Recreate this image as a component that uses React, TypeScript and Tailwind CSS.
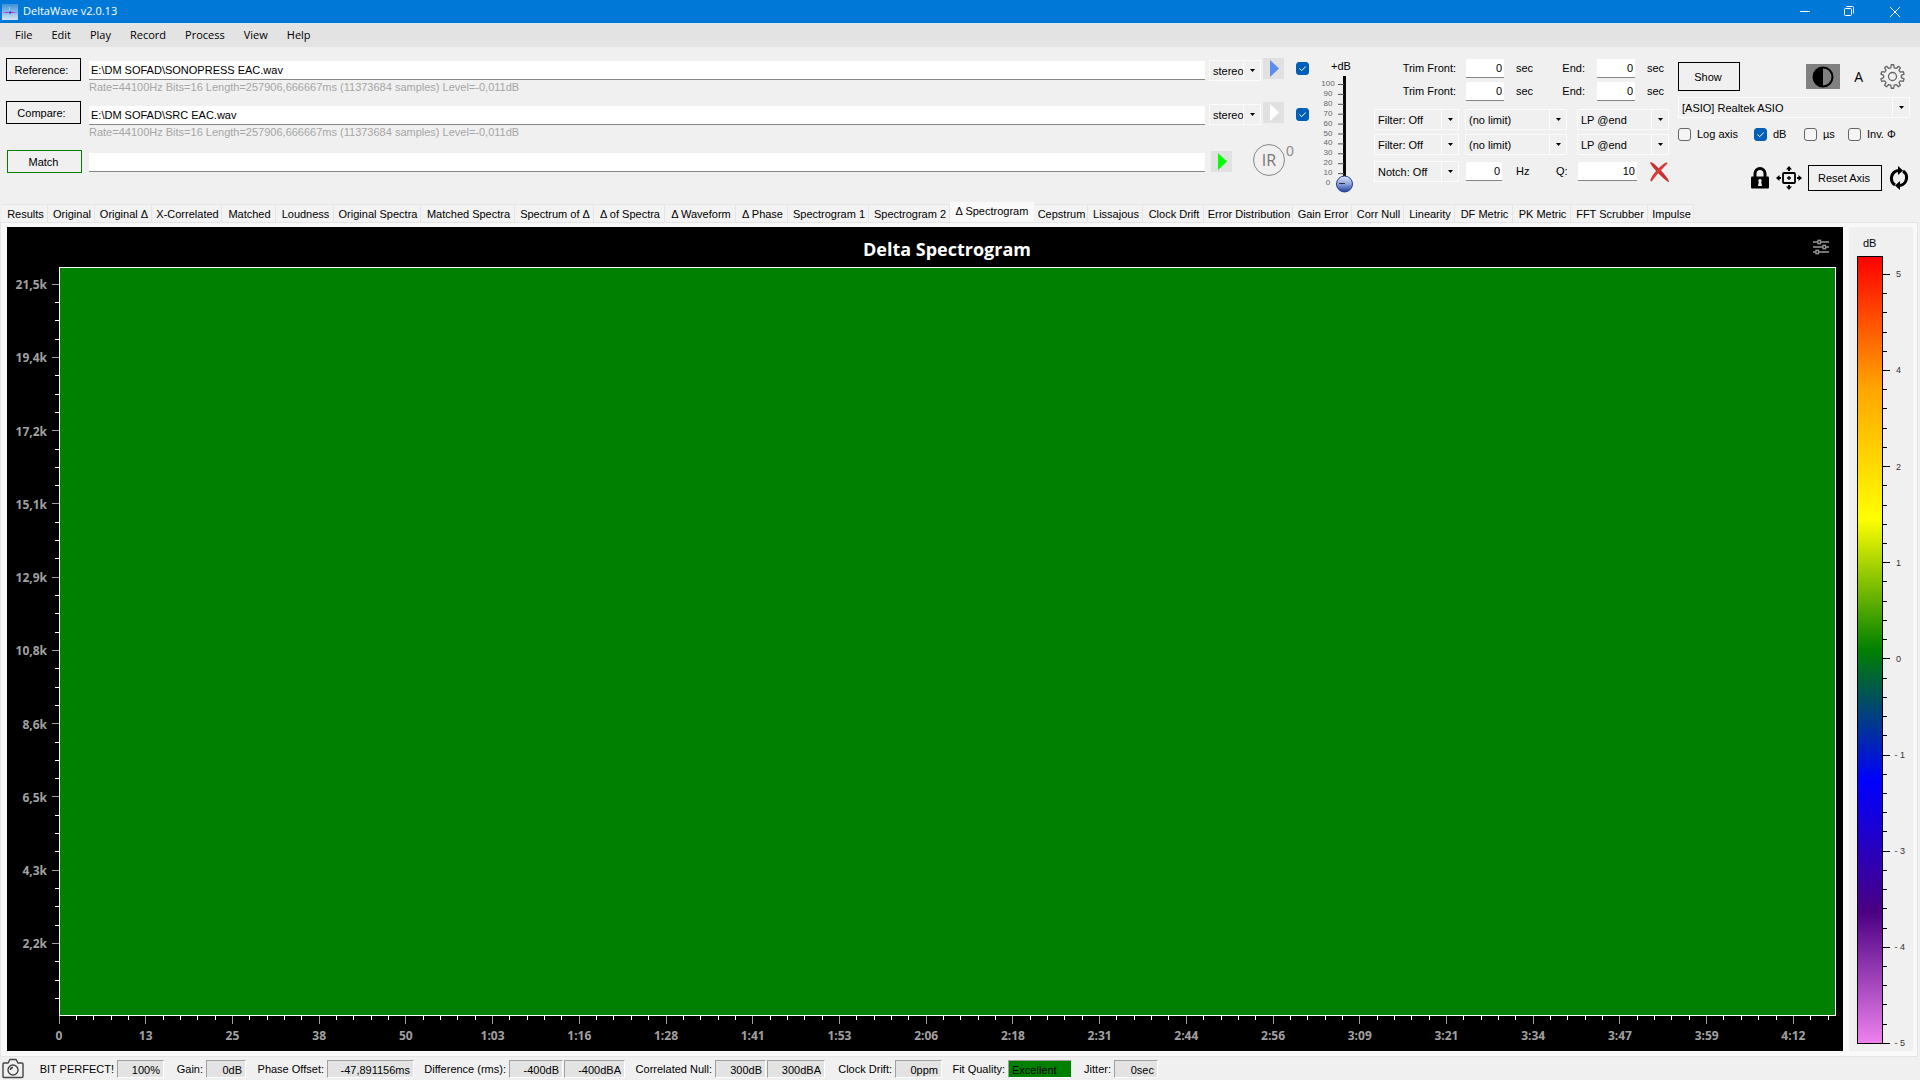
import type { ReactNode } from "react";

const tabs = [
  { name: "Results", width: "w-[46px]" },
  { name: "Original", width: "w-[47px]" },
  { name: "Original Δ", width: "w-[57px]" },
  { name: "X-Correlated", width: "w-[70px]" },
  { name: "Matched", width: "w-[54px]" },
  { name: "Loudness", width: "w-[58px]" },
  { name: "Original Spectra", width: "w-[87px]" },
  { name: "Matched Spectra", width: "w-[94px]" },
  { name: "Spectrum of Δ", width: "w-[79px]" },
  { name: "Δ of Spectra", width: "w-[71px]" },
  { name: "Δ Waveform", width: "w-[71px]" },
  { name: "Δ Phase", width: "w-[52px]" },
  { name: "Spectrogram 1", width: "w-[81px]" },
  { name: "Spectrogram 2", width: "w-[81px]" },
  { name: "Δ Spectrogram", width: "w-[84px]" },
  { name: "Cepstrum", width: "w-[54px]" },
  { name: "Lissajous", width: "w-[55px]" },
  { name: "Clock Drift", width: "w-[61px]" },
  { name: "Error Distribution", width: "w-[89px]" },
  { name: "Gain Error", width: "w-[59px]" },
  { name: "Corr Null", width: "w-[52px]" },
  { name: "Linearity", width: "w-[51px]" },
  { name: "DF Metric", width: "w-[58px]" },
  { name: "PK Metric", width: "w-[58px]" },
  { name: "FFT Scrubber", width: "w-[77px]" },
  { name: "Impulse", width: "w-[46px]" },
];

const status = [
  { label: "BIT PERFECT!", labelWidth: "w-[93px]", values: [{ text: "100%", width: "w-[47px]" }] },
  { label: "Gain:", labelWidth: "w-[42px]", values: [{ text: "0dB", width: "w-[40px]" }] },
  { label: "Phase Offset:", labelWidth: "w-[81px]", values: [{ text: "-47,891156ms", width: "w-[87px]" }] },
  {
    label: "Difference (rms):",
    labelWidth: "w-[95px]",
    values: [
      { text: "-400dB", width: "w-[54px]" },
      { text: "-400dBA", width: "w-[61px]" },
    ],
  },
  {
    label: "Correlated Null:",
    labelWidth: "w-[90px]",
    values: [
      { text: "300dB", width: "w-[51px]" },
      { text: "300dBA", width: "w-[58px]" },
    ],
  },
  { label: "Clock Drift:", labelWidth: "w-[70px]", values: [{ text: "0ppm", width: "w-[47px]" }] },
  { label: "Fit Quality:", labelWidth: "w-[66px]", values: [{ text: "Excellent", width: "w-[64px]", good: true }] },
  { label: "Jitter:", labelWidth: "w-[42px]", values: [{ text: "0sec", width: "w-[44px]" }] },
];

const freqLabels = ["21,5k", "19,4k", "17,2k", "15,1k", "12,9k", "10,8k", "8,6k", "6,5k", "4,3k", "2,2k"];
const timeLabels = [
  "0", "13", "25", "38", "50", "1:03", "1:16", "1:28", "1:41", "1:53", "2:06",
  "2:18", "2:31", "2:44", "2:56", "3:09", "3:21", "3:34", "3:47", "3:59", "4:12",
];
const scaleLabels = ["5", "4", "2", "1", "0", "- 1", "- 3", "- 4", "- 5"];

const range = (n: number) => Array.from({ length: n }, (_, i) => i);

function Play({ color, label }: { color: string; label: string }) {
  return (
    <button aria-label={label} className="flex h-[21px] w-[21px] items-center justify-center bg-[#e1e1e1]">
      <svg width="21" height="21" viewBox="0 0 21 21">
        <path d="M7 2 16 10.5 7 19Z" fill={color} />
      </svg>
    </button>
  );
}

function Check({ label, checked, children }: { label?: string; checked?: boolean; children?: ReactNode }) {
  return (
    <label className="flex items-center gap-[6px]">
      <span className="relative flex">
        <input
          type="checkbox"
          aria-label={label}
          defaultChecked={checked}
          className="peer h-[13px] w-[13px] appearance-none rounded-[3px] border border-[#666] bg-[#f5f5f5] checked:border-[#005fb8] checked:bg-[#005fb8]"
        />
        <svg viewBox="0 0 13 13" className="pointer-events-none absolute inset-0 hidden peer-checked:block">
          <path d="m3.5 6.5 2.2 2.2 4-4.2" fill="none" stroke="#fff" strokeWidth="1" />
        </svg>
      </span>
      {children}
    </label>
  );
}

function Drop({ value, label, className }: { value: string; label: string; className: string }) {
  return (
    <div className={`relative h-[21px] border border-[#fcfcfc] ${className}`}>
      <select aria-label={label} className="block h-full w-full appearance-none bg-transparent pt-px pl-[3px] outline-none">
        <option>{value}</option>
      </select>
      <span className="pointer-events-none absolute inset-y-0 right-0 flex w-[17px] items-center justify-center border-l border-[#fcfcfc]">
        <svg width="5" height="3" viewBox="0 0 5 3">
          <path d="M0 0h5L2.5 3Z" />
        </svg>
      </span>
    </div>
  );
}

function Num({ id, value, className = "w-[38px]" }: { id: string; value: string; className?: string }) {
  return (
    <input
      id={id}
      defaultValue={value}
      className={`h-[19px] border-b border-[#868686] bg-white pr-[2px] text-right outline-none ${className}`}
    />
  );
}

function FilePath({ label, value }: { label: string; value: string }) {
  return (
    <input
      aria-label={label}
      defaultValue={value}
      className="block h-[19px] w-full border-b border-[#868686] bg-white pl-[2px] outline-none"
    />
  );
}

function TrimRow({ id }: { id: string }) {
  return (
    <div className="flex items-center">
      <label htmlFor={`${id}-front`} className="w-[82px] text-right">Trim Front:</label>
      <span className="w-[10px]" />
      <Num id={`${id}-front`} value="0" />
      <span className="w-[50px] pl-3">sec</span>
      <label htmlFor={`${id}-end`} className="w-[31px] text-right">End:</label>
      <span className="w-3" />
      <Num id={`${id}-end`} value="0" />
      <span className="pl-3">sec</span>
    </div>
  );
}

function FilterRow({ id }: { id: string }) {
  return (
    <div className="flex">
      <Drop label={`Filter ${id}`} value="Filter: Off" className="w-[85px]" />
      <Drop label={`Limit ${id}`} value="(no limit)" className="ml-[6px] w-[102px]" />
      <Drop label={`Mode ${id}`} value="LP @end" className="ml-[10px] w-[92px]" />
    </div>
  );
}

// outline of a cog, centred on 12.5
function cogPath(teeth: number, inner: number, outer: number) {
  const pts: string[] = [];
  const step = (Math.PI * 2) / teeth;
  for (let i = 0; i < teeth; i++) {
    const a = i * step - Math.PI / 2;
    [
      [-0.3, inner],
      [-0.17, outer],
      [0.17, outer],
      [0.3, inner],
    ].forEach(([o, r]) => pts.push(`${12.5 + r * Math.cos(a + o * step)} ${12.5 + r * Math.sin(a + o * step)}`));
  }
  return `M${pts.join("L")}Z`;
}

function GainSlider() {
  return (
    <div className="ml-[12px] w-[40px] pt-[12px]">
      <div className="pl-[10px] leading-[14px]">+dB</div>
      <div className="relative">
        <svg width="40" height="122" viewBox="0 0 40 122" className="block overflow-visible">
          <defs>
            <linearGradient id="knob" x1="0" y1="0" x2="0" y2="1">
              <stop offset="0" stopColor="#dfe6fa" />
              <stop offset="0.5" stopColor="#8ea4dc" />
              <stop offset="1" stopColor="#1f3f9f" />
            </linearGradient>
          </defs>
          <rect x="22" y="3" width="3" height="108" fill="#0a0a0a" />
          {range(11).map((i) => (
            <g key={i}>
              <path d={`M17 ${11.5 + i * 9.9}h6`} stroke="#555" strokeWidth="1" />
              <text x="7" y={13 + i * 9.9} textAnchor="middle" fontSize="8" fill="#666">
                {100 - i * 10}
              </text>
            </g>
          ))}
          <circle cx="23.5" cy="111" r="8" fill="url(#knob)" stroke="#23408f" />
          <path d="M18 110.5h6" stroke="#333" />
        </svg>
        <input
          type="range"
          aria-label="Gain dB"
          min="0"
          max="100"
          defaultValue="0"
          className="absolute inset-y-0 right-2 w-4 opacity-0 [direction:rtl] [writing-mode:vertical-lr]"
        />
      </div>
    </div>
  );
}

function Toolbar() {
  return (
    <section className="flex h-[157px] items-start pl-[6px] pr-[10px]">
      <div className="flex w-[76px] flex-col pt-[11px]">
        <button className="h-[23px] w-[75px] border border-black pt-px pr-1">Reference:</button>
        <button className="mt-5 h-[23px] w-[75px] border border-black pt-px pr-1">Compare:</button>
        <button className="mt-[26px] ml-px h-[23px] w-[75px] border border-[#008000] pt-px pr-[2px]">Match</button>
      </div>

      <div className="ml-[7px] min-w-0 flex-1 pt-[14px]">
        <FilePath label="Reference file" value="E:\DM SOFAD\SONOPRESS EAC.wav" />
        <p className="h-[26px] pt-px leading-[13px] text-[#a6a6a6]">
          Rate=44100Hz Bits=16 Length=257906,666667ms (11373684 samples) Level=-0,011dB
        </p>
        <FilePath label="Compare file" value="E:\DM SOFAD\SRC EAC.wav" />
        <p className="h-[28px] pt-px leading-[13px] text-[#a6a6a6]">
          Rate=44100Hz Bits=16 Length=257906,666667ms (11373684 samples) Level=-0,011dB
        </p>
        <FilePath label="Match result" value="" />
      </div>

      <div className="ml-1 w-[100px] pt-[11px]">
        <div className="flex h-[44px] items-start">
          <Drop label="Reference channel" value="stereo" className="mt-[2px] mr-[2px] w-[52px]" />
          <Play color="#5b8def" label="Play reference" />
          <span className="ml-3 pt-1">
            <Check label="Use reference" checked />
          </span>
        </div>
        <div className="flex h-[45px] items-start">
          <Drop label="Compare channel" value="stereo" className="mt-[2px] mr-[2px] w-[52px]" />
          <Play color="#ffffff" label="Play compare" />
          <span className="ml-3 pt-[6px]">
            <Check label="Use compare" checked />
          </span>
        </div>
        <div className="flex items-start">
          <span className="ml-[2px] pt-1">
            <Play color="#00ff00" label="Play match" />
          </span>
          <button className="ml-[21px] mt-[-3px] flex text-[#8c8c8c]">
            <span className="flex h-8 w-8 items-center justify-center rounded-full border border-[#888] font-['Open_Sans',sans-serif] text-base font-normal text-[#777]">
              IR
            </span>
            <span className="ml-px text-sm leading-[14px]">0</span>
          </button>
        </div>
      </div>

      <GainSlider />

      <div className="ml-[13px] w-[295px] pt-[12px]">
        <div className="flex flex-col gap-1">
          <TrimRow id="ref" />
          <TrimRow id="cmp" />
        </div>
        <div className="mt-[8px] flex flex-col gap-1">
          <FilterRow id="1" />
          <FilterRow id="2" />
        </div>
        <div className="mt-[6px] flex items-center">
          <Drop label="Notch" value="Notch: Off" className="w-[85px]" />
          <span className="w-[7px]" />
          <Num id="notch-hz" value="0" className="w-[36px]" />
          <label htmlFor="notch-hz" className="w-[41px] pl-[14px]">Hz</label>
          <label htmlFor="notch-q" className="w-[35px] pl-[13px]">Q:</label>
          <Num id="notch-q" value="10" className="w-[59px]" />
          <button aria-label="Clear filters" className="ml-3">
            <svg width="20" height="20" viewBox="0 0 20 20">
              <path d="M2 1c2 0 15 13 17 18-3-2-14-12-17-18Z" fill="#c8312f" stroke="#c8312f" strokeWidth="1.5" />
              <path d="M18 1C13 3 3 13 2 19c3-4 11-13 16-18Z" fill="#e04a46" stroke="#d43d3a" strokeWidth="1.5" />
            </svg>
          </button>
        </div>
      </div>

      <div className="ml-[9px] w-[232px] pt-[15px]">
        <div className="flex items-center">
          <button className="h-[29px] w-[62px] border border-black pt-px pr-[2px]">Show</button>
          <button aria-label="Contrast" className="ml-auto flex h-[25px] w-[34px] items-center justify-center bg-[#808080]">
            <svg width="22" height="22" viewBox="0 0 22 22">
              <circle cx="11" cy="11" r="9.5" fill="#808080" stroke="#000" strokeWidth="2" />
              <path d="M11 1.5a9.5 9.5 0 0 0 0 19Z" />
            </svg>
          </button>
          <button className="mr-[17px] ml-[14px] pt-px font-['Open_Sans',sans-serif] text-sm">A</button>
          <button aria-label="Settings" className="mr-[5px]">
            <svg width="25" height="25" viewBox="0 0 25 25" fill="none" stroke="#666" strokeWidth="1.3" strokeLinejoin="round">
              <path d={cogPath(10, 8.9, 11.8)} />
              <circle cx="12.5" cy="12.5" r="4" />
            </svg>
          </button>
        </div>
        <Drop label="Audio device" value="[ASIO] Realtek ASIO" className="mt-[6px] w-full" />
        <div className="mt-[9px] flex h-[14px] items-center">
          <span className="w-[76px]"><Check>Log axis</Check></span>
          <span className="w-[50px]"><Check checked>dB</Check></span>
          <span className="w-[44px]"><Check>µs</Check></span>
          <Check>Inv. Φ</Check>
        </div>
        <div className="mt-6 flex items-center justify-end pr-px">
          <button aria-label="Lock axis">
            <svg width="20" height="24" viewBox="0 0 20 24">
              <path d="M5 11V7.5a5 5 0 0 1 10 0V11" fill="none" stroke="#000" strokeWidth="3" />
              <rect x="1" y="10.5" width="18" height="12" rx="1" />
              <circle cx="10" cy="14.8" r="1.7" fill="#f0f0f0" />
              <path d="M9 15h2l1 5H8Z" fill="#f0f0f0" />
            </svg>
          </button>
          <button aria-label="Pan" className="mx-[6px]">
            <svg width="26" height="24" viewBox="0 0 26 24">
              <rect x="7" y="7" width="12" height="10" rx="1" fill="none" stroke="#000" strokeWidth="1.8" />
              <path d="M11 12h4M13 10v4" stroke="#000" strokeWidth="1.3" />
              <path d="m13 0 3 3.5h-2V5h-2V3.5h-2ZM13 24l3-3.5h-2V19h-2v1.5h-2ZM0 12l3.5-3v2H5v2H3.5v2ZM26 12l-3.5-3v2H21v2h1.5v2Z" />
            </svg>
          </button>
          <button className="h-[26px] w-[74px] border border-black pr-[2px]">Reset Axis</button>
          <button aria-label="Refresh" className="ml-[7px]">
            <svg width="20" height="24" viewBox="0 0 20 24">
              <path d="M6 19A8 8 0 0 1 9 4.5M14 5a8 8 0 0 1-3 14.5" fill="none" stroke="#000" strokeWidth="3" />
              <path d="M9 0v9l5-4.5ZM11 24v-9l-5 4.5Z" />
            </svg>
          </button>
        </div>
      </div>
    </section>
  );
}

// positions are given in percent of the plot so that the axes follow its size
function Spectrogram() {
  const yStart = 2.3;
  const yStep = 9.78;
  const xStep = 4.88;
  return (
    <div className="flex min-w-0 flex-1 flex-col bg-black pr-[7px]">
      <div className="flex h-10 items-center">
        <h1 className="flex-1 pt-1 pl-[74px] text-center font-['Open_Sans',sans-serif] text-lg leading-9 font-bold text-white">
          Delta Spectrogram
        </h1>
        <button aria-label="Chart options" className="mr-[7px]">
          <svg width="16" height="16" viewBox="0 0 16 16" fill="#000" stroke="#999" strokeWidth="1.3">
            <path d="M0 3h16M0 8h16M0 13h16" />
            <rect x="5" y="1.3" width="2.5" height="3.4" />
            <rect x="10" y="6.3" width="2.5" height="3.4" />
            <rect x="3" y="11.3" width="2.5" height="3.4" />
          </svg>
        </button>
      </div>
      <div className="flex min-h-0 flex-1">
        <svg className="h-full w-[52px] overflow-visible font-['Open_Sans',sans-serif] text-xs font-bold" shapeRendering="crispEdges">
          {freqLabels.map((t, i) => (
            <g key={t}>
              <line x1="45" x2="52" y1={`${yStart + i * yStep}%`} y2={`${yStart + i * yStep}%`} stroke="#a0a0a0" />
              <text x="40" y={`${yStart + i * yStep}%`} dy="5" textAnchor="end" fill="#a0a0a0">
                {t}
              </text>
              {[1, 2, 3].map((m) => {
                const y = `${yStart + (i + m / 4) * yStep}%`;
                return <line key={m} x1="48" x2="52" y1={y} y2={y} stroke="#fff" />;
              })}
            </g>
          ))}
        </svg>
        <div className="flex-1 border border-white bg-[#008000]" />
      </div>
      <div className="h-[35px] pl-[52px]">
        <svg className="h-full w-full overflow-visible font-['Open_Sans',sans-serif] text-xs font-bold" shapeRendering="crispEdges">
          {timeLabels.map((t, i) => (
            <g key={t}>
              <line x1={`${i * xStep}%`} x2={`${i * xStep}%`} y1="0" y2="8" stroke="#a0a0a0" />
              <text x={`${i * xStep}%`} y="24" textAnchor="middle" fill="#a0a0a0">
                {t}
              </text>
              {(i < 20 ? [1, 2, 3, 4] : [1, 2]).map((m) => {
                const x = `${(i + m / 5) * xStep}%`;
                return <line key={m} x1={x} x2={x} y1="0" y2="4" stroke="#fff" />;
              })}
            </g>
          ))}
        </svg>
      </div>
    </div>
  );
}

function ColorScale() {
  const start = 2.33;
  const step = 12.2;
  return (
    <aside className="ml-[6px] flex w-[64px] flex-col bg-[#f0f0f0] pt-[10px] pb-[7px] pl-2">
      <div className="h-[19px] pl-[6px] leading-[13px]">dB</div>
      <div className="flex flex-1">
        <div className="w-[26px] border border-black bg-[linear-gradient(to_bottom,#ff0000,#ffa500,#ffff00,#008000,#0000ff,#4b0082,#ee82ee)]" />
        <svg className="h-full w-[30px] overflow-visible" shapeRendering="crispEdges">
          {scaleLabels.map((t, i) => (
            <g key={t}>
              <line x1="0" x2="7" y1={`${start + i * step}%`} y2={`${start + i * step}%`} stroke="#000" />
              <text x={i > 4 ? 22 : 18} y={`${start + i * step}%`} dy="3" textAnchor="end" fontSize="9" fill="#333">
                {t}
              </text>
              {i < 8 &&
                [1, 2, 3, 4].map((m) => {
                  const y = `${start + (i + m / 5) * step}%`;
                  return <line key={m} x1="0" x2="4" y1={y} y2={y} stroke="#000" />;
                })}
            </g>
          ))}
        </svg>
      </div>
    </aside>
  );
}

export default function App() {
  return (
    <div className="flex h-screen flex-col overflow-hidden bg-[#f0f0f0] font-['Liberation_Sans',Arial,sans-serif] text-[11px] whitespace-nowrap text-black">
      {/* Title bar */}
      <header className="flex h-[23px] items-center bg-[#0078d7] pl-[2px] font-['Open_Sans',sans-serif] text-white">
        <svg width="16" height="16" viewBox="0 0 16 16">
          <defs>
            <linearGradient id="logo" x1="0" y1="0" x2="0" y2="1">
              <stop offset="0" stopColor="#3f8fd8" />
              <stop offset="1" stopColor="#d5e4f4" />
            </linearGradient>
          </defs>
          <rect width="16" height="16" fill="url(#logo)" />
          <path d="M1 8.5h14" stroke="#7a8cf0" />
          <path d="M7.5 3v10" stroke="#8fd0ff" />
          <path d="M3 8.5h3M9 8.5h3" stroke="#c02ec0" />
          <path d="M7 8.5h2" stroke="#2531e8" strokeWidth="2" />
        </svg>
        <span className="ml-[5px] flex-1">DeltaWave v2.0.13</span>
        <button aria-label="Minimize" className="flex w-[45px] justify-center">
          <svg width="10" height="10" stroke="#fff"><path d="M0 4.5h10" /></svg>
        </button>
        <button aria-label="Restore" className="flex w-[45px] justify-center">
          <svg width="11" height="11" fill="none" stroke="#fff">
            <rect x="0.5" y="2.5" width="7" height="7" rx="1" />
            <path d="M2.5 .5h6a1 1 0 0 1 1 1v6" />
          </svg>
        </button>
        <button aria-label="Close" className="mr-[3px] flex w-[45px] justify-center">
          <svg width="10" height="10" stroke="#fff"><path d="m0 0 10 10M10 0 0 10" /></svg>
        </button>
      </header>

      {/* Menu */}
      <nav className="flex h-[24px] items-center gap-[19px] bg-[#e3e3e3] pl-[15px] font-['Open_Sans',sans-serif]">
        {["File", "Edit", "Play", "Record", "Process", "View", "Help"].map((m) => (
          <button key={m}>{m}</button>
        ))}
      </nav>

      <Toolbar />

      {/* Tabs */}
      <div role="tablist" className="flex h-[18px] items-end pl-[2px]">
        {tabs.map((t) =>
          t.name === "Δ Spectrogram" ? (
            <button key={t.name} role="tab" aria-selected="true" className={`relative z-10 h-5 shrink-0 bg-[#f9f9f9] pb-px ${t.width}`}>
              {t.name}
            </button>
          ) : (
            <button key={t.name} role="tab" aria-selected="false" className={`h-[18px] shrink-0 border-t border-r border-[#e5e5e5] bg-[#f3f3f3] pt-px pl-[2px] ${t.width}`}>
              {t.name}
            </button>
          ),
        )}
      </div>

      <main className="mr-[2px] flex min-h-0 flex-1 border border-[#e5e5e5] bg-[#f9f9f9] pt-1 pr-1 pb-[5px] pl-[6px]">
        <Spectrogram />
        <ColorScale />
      </main>

      {/* Status bar */}
      <footer className="flex h-[23px] items-center pl-[2px]">
        <button aria-label="Screenshot">
          <svg width="22" height="21" viewBox="0 0 22 21" fill="none" stroke="#444" strokeWidth="1.4">
            <path d="M1 6q0-1 1-1h4l2-3.5h6L16 5h4q1 0 1 1v12.5q0 1-1 1H2q-1 0-1-1Z" />
            <circle cx="11" cy="12" r="5" />
            <path d="M8.5 12a2.5 2.5 0 0 1 2.5-2.5" />
          </svg>
        </button>
        {status.map((s) => (
          <div key={s.label} className="flex items-center">
            <span className={`pt-px pr-[3px] text-right ${s.labelWidth}`}>{s.label}</span>
            <span className="flex gap-px">
              {s.values.map((v) => (
                <output
                  key={v.text}
                  className={`h-[18px] border border-t-[#a0a0a0] border-l-[#a0a0a0] border-r-white border-b-white px-[3px] pt-px leading-4 ${
                    "good" in v ? "bg-[#008000]" : "bg-[#e3e3e3] text-right"
                  } ${v.width}`}
                >
                  {v.text}
                </output>
              ))}
            </span>
          </div>
        ))}
      </footer>
    </div>
  );
}
